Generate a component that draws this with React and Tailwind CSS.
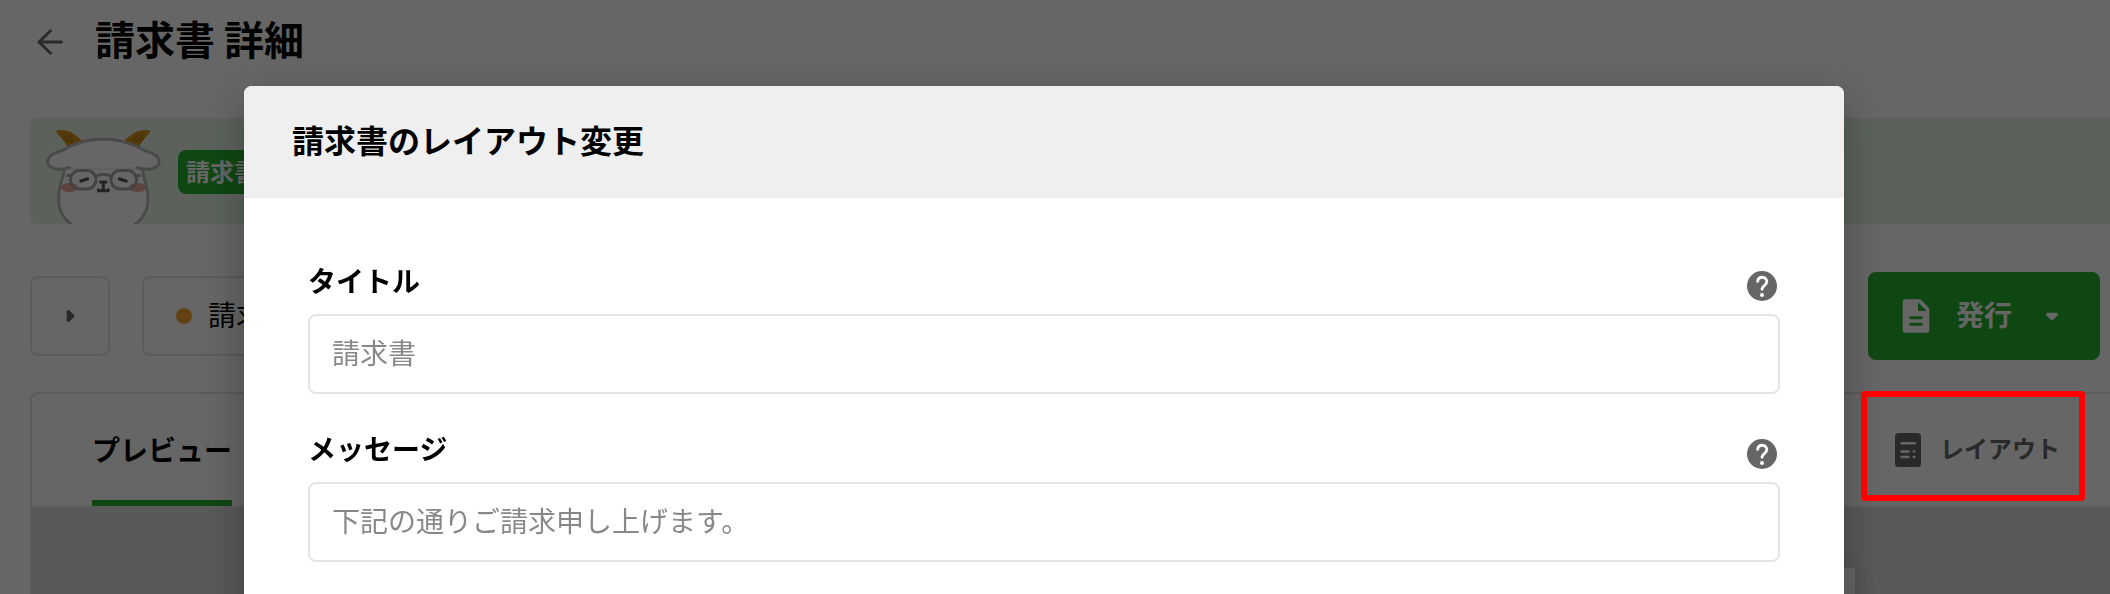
import { useId } from 'react';

const FIELDS = [
  { name: 'title', label: 'タイトル', placeholder: '請求書' },
  { name: 'message', label: 'メッセージ', placeholder: '下記の通りご請求申し上げます。' },
];

const BackIcon = () => (
  <svg viewBox="0 0 26 26" className="size-[26px]" fill="none" stroke="currentColor" strokeWidth="3" strokeLinecap="round" strokeLinejoin="round">
    <path d="M24.5 13H2M13.5 1.8L2 13l11.5 11.2" />
  </svg>
);

const CaretIcon = ({ className }) => (
  <svg viewBox="0 0 24 24" className={className} fill="currentColor">
    <path d="M8.71 11.71l2.59 2.59c.39.39 1.02.39 1.41 0l2.59-2.59c.63-.63.18-1.71-.71-1.71H9.41c-.89 0-1.33 1.08-.7 1.71z" />
  </svg>
);

const DocumentIcon = () => (
  <svg viewBox="0 0 24 24" className="size-10" fill="currentColor">
    <path
      fillRule="evenodd"
      d="M5.5 2h9.1L20 7.4V20.5a1.5 1.5 0 0 1-1.5 1.5h-13A1.5 1.5 0 0 1 4 20.5v-17A1.5 1.5 0 0 1 5.5 2zM13.2 3.8V9h5.2zM8.9 12.1a.95.95 0 0 0 0 1.9h6.2a.95.95 0 0 0 0-1.9zM8.9 16a.95.95 0 0 0 0 1.9h6.2a.95.95 0 0 0 0-1.9z"
    />
  </svg>
);

const LayoutIcon = () => (
  <svg viewBox="0 0 40 40" className="size-10">
    <rect x="7" y="3" width="26" height="34" rx="3.5" fill="currentColor" />
    <g stroke="#fff" strokeWidth="2.4" strokeLinecap="round">
      <path d="M13.5 13.2h13.5M13.5 21.5h7M13.5 27h7M25.8 21.5h.6M25.8 27h.6" />
    </g>
  </svg>
);

const HelpIcon = () => (
  <svg viewBox="0 0 36 36" className="size-9">
    <circle cx="18" cy="18" r="15" fill="currentColor" />
    <path d="M13.6 13.2c.5-2.6 2.2-4 4.5-4 2.7 0 4.7 1.9 4.7 4.4 0 4-4.6 4-4.8 7.6" fill="none" stroke="#fff" strokeWidth="2.9" strokeLinecap="round" />
    <circle cx="18" cy="27" r="2" fill="#fff" />
  </svg>
);

const GoatMascot = () => (
  <svg viewBox="0 0 116 94" className="h-[94px] w-[116px]" fill="none" strokeLinecap="round" strokeLinejoin="round">
    {/* Horns */}
    <g fill="#d4911e">
      <path d="M10.5 2.5C9 0 13 0 17 0c8 1 14 5 19 11L22 20c-1-7-7-12-11.5-17.5z" />
      <path d="M104 2.5C105.5 0 101.500 0 97.5 0c-8 1-14 5-19 11l14 9c1-7 7-12 11.5-17.5z" />
    </g>
    <g stroke="#b57a17" strokeWidth="1.5">
      <path d="M17 4l8 8 2 4M23 5l4 6M17 8l5 4" />
      <path d="M97.5 4l-8 8-2 4M91.5 5l-4 6M97.5 8l-5 4" />
    </g>
    {/* Body and head */}
    <path d="M18 40c-1 9-5.5 17-5.5 29 0 14 7 23 19 29h51.5c12-6 19-15 19-29 0-12-4.5-20-5.5-29" fill="#fff" stroke="#b8b8b8" strokeWidth="3" />
    <path d="M23.3 37.5C13 41 2 39 1.5 32 1 25 10 23 16 20.5 27 14 39 9 57.3 9s30.3 5 41.3 11.5c6 2.5 15 4.5 14.5 11.5-.5 7-11.5 9-21.8 5.5" fill="#fff" stroke="#b8b8b8" strokeWidth="3" />
    {/* Cheeks */}
    <g fill="#e5a898">
      <ellipse cx="23.5" cy="57.5" rx="8.5" ry="4.5" />
      <ellipse cx="91.5" cy="57.5" rx="8.5" ry="4.5" />
    </g>
    {/* Glasses */}
    <g stroke="#a8a8a8" strokeWidth="3">
      <rect x="24.5" y="40.5" width="25.5" height="18.5" rx="9" />
      <rect x="65" y="40.5" width="25.5" height="18.5" rx="9" />
      <path d="M50.5 46q7-3.5 14 0M24 45.5h-2.5M91 45.5h2.5" />
    </g>
    <g stroke="#555" strokeWidth="3.4">
      <path d="M35 51l6.5-2M73.5 49l6.5 2" />
      <path d="M54.5 52h5.5M57.3 52v8.5M52.5 59.8v.9h9.6v-.9" strokeWidth="3" />
    </g>
  </svg>
);

const Field = ({ label, placeholder, name }) => {
  const id = useId();
  return (
    <div>
      <div className="flex h-12 items-start justify-between">
        <label htmlFor={id} className="text-[28px] leading-7 font-bold">{label}</label>
        <button type="button" aria-label={`${label}のヘルプ`} className="mt-0.5 text-[#666]">
          <HelpIcon />
        </button>
      </div>
      <input
        id={id}
        name={name}
        type="text"
        placeholder={placeholder}
        className="block h-20 w-full rounded-lg border-2 border-[#e4e4e4] px-[22px] pb-1 text-[28px] outline-none placeholder:text-[#888] focus:border-[#26b22f]"
      />
    </div>
  );
};

const LayoutDialog = () => (
  <div className="fixed inset-0 z-20 flex items-start justify-center overflow-hidden bg-black/60 pt-[86px] pr-[22px]">
    <div
      role="dialog"
      aria-modal="true"
      aria-labelledby="dialog-title"
      className="min-h-[640px] w-[1600px] shrink overflow-hidden rounded-lg bg-white shadow-[0_11px_15px_-7px_rgba(0,0,0,0.2),0_24px_38px_3px_rgba(0,0,0,0.14),0_9px_46px_8px_rgba(0,0,0,0.12)]"
    >
      <div className="flex h-28 items-center bg-[#efefef] px-12 pb-1.5">
        <h2 id="dialog-title" className="text-[32px] leading-10 font-bold">請求書のレイアウト変更</h2>
      </div>
      <form className="flex flex-col gap-10 px-16 pt-[68px]">
        {FIELDS.map((f) => (
          <Field key={f.name} {...f} />
        ))}
      </form>
    </div>
  </div>
);

const App = () => (
  <div className="h-screen overflow-hidden bg-white font-['Noto_Sans_CJK_JP',sans-serif] text-black" lang="ja">
    <header className="flex h-[84px] items-center gap-8 pl-[37px]">
      <button type="button" aria-label="戻る" className="text-[#666]">
        <BackIcon />
      </button>
      <h1 className="pb-2 text-[40px] leading-[48px] font-bold">請求書 詳細</h1>
    </header>

    <main className="pt-[34px] pl-[30px]">
      {/* Notice */}
      <div className="flex h-[106px] items-center overflow-hidden rounded-l-lg bg-[#e6f5e4] pt-0.5 pl-4">
        <div className="self-end">
          <GoatMascot />
        </div>
        <span className="ml-4 flex h-11 items-center rounded-lg bg-[#26b22f] px-2 pb-0.5 text-2xl font-bold text-white">請求書</span>
      </div>

      {/* Actions */}
      <div className="mt-12 flex h-[88px] items-center pr-2.5">
        <button type="button" aria-label="次へ" className="flex size-20 items-center justify-center rounded-lg border-2 border-[#e4e4e4] text-[#666]">
          <CaretIcon className="size-10 -rotate-90" />
        </button>
        <button type="button" className="ml-8 flex h-20 items-center gap-4 rounded-lg border-2 border-[#e4e4e4] px-8 text-[28px]">
          <span className="size-4 rounded-full bg-[#f5a62e]" />
          <span className="pb-1">請求書</span>
        </button>
        <button type="button" className="ml-auto flex h-full items-center gap-5 rounded-lg bg-[#26b22f] px-7 text-[28px] font-bold text-white">
          <DocumentIcon />
          <span className="pb-1">発行</span>
          <CaretIcon className="size-10" />
        </button>
      </div>

      {/* Preview panel */}
      <section className="mt-8 rounded-tl-lg border-t-2 border-l-2 border-[#e4e4e4]">
        <div className="flex h-[114px] items-stretch justify-between border-b-2 border-[#e4e4e4] pr-[25px] pl-[60px]">
          <button type="button" className="border-y-6 border-t-transparent border-b-[#26b22f] pb-0.5 text-[28px] font-bold">プレビュー</button>
          <div className="relative flex">
            <button type="button" className="flex items-center gap-3 pr-[25px] pl-[27px] text-2xl font-bold text-[#666]">
              <LayoutIcon />
              <span className="pb-1">レイアウト</span>
            </button>
            <span className="pointer-events-none absolute inset-x-0 -top-[3px] bottom-[5px] z-30 rounded-sm border-6 border-[#f00]" />
          </div>
        </div>
        <div className="bg-[#dedede] px-[255px] pt-[60px]">
          <div className="h-[400px] bg-white shadow-[0_0_24px_rgba(0,0,0,0.12)]" />
        </div>
      </section>
    </main>

    <LayoutDialog />
  </div>
);

export default App;
